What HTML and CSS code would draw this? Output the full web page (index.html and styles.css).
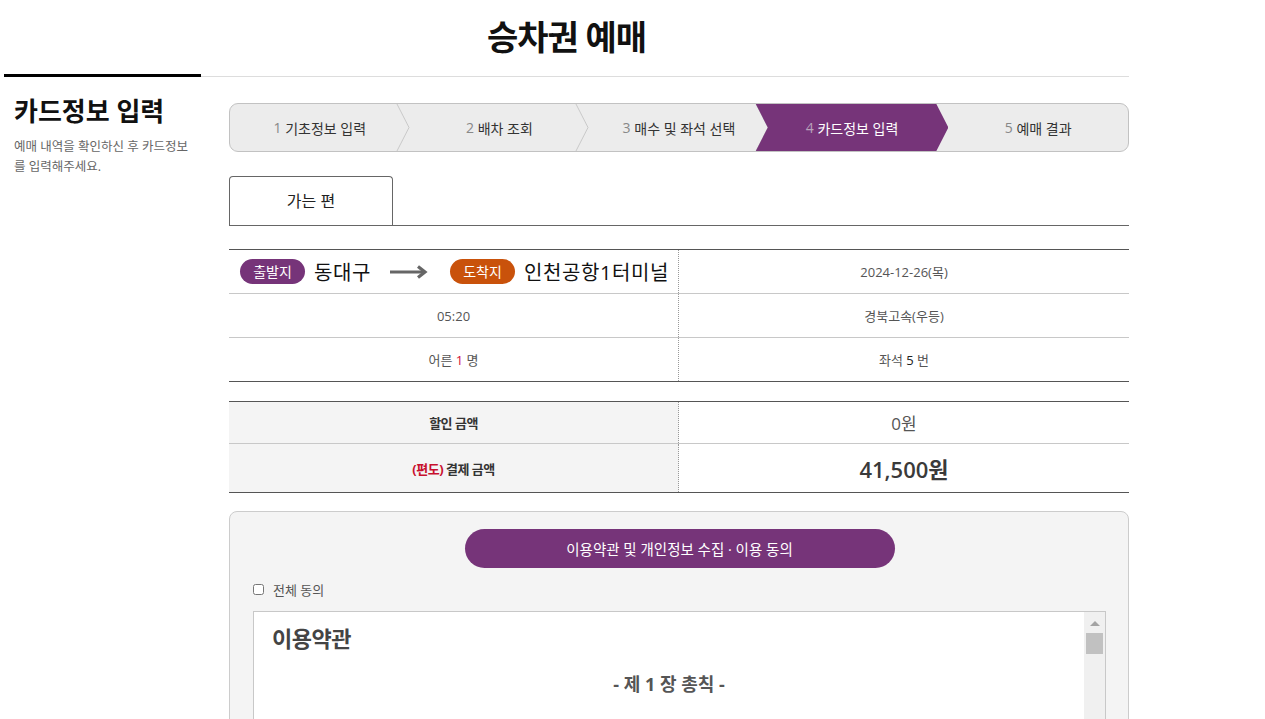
FILE: index.html
```html
<!DOCTYPE html>
<html lang="ko">
<head>
  <meta charset="UTF-8">
  <meta name="viewport" content="width=device-width, initial-scale=1.0">
  <title>승차권 예매</title>
  <link rel="stylesheet" href="styles.css">
</head>
<body>

<div id="wrap">
  <h1 class="page-title">승차권 예매</h1>
  <div class="rule">
    <div class="rule-mark"></div>
    <div class="rule-line"></div>
  </div>

  <div class="layout">
    <div class="side">
      <h2>카드정보 입력</h2>
      <p>예매 내역을 확인하신 후 카드정보를 입력해주세요.</p>
    </div>

    <div class="main">
      <ol class="steps">
        <li class="step"><span class="num">1</span> 기초정보 입력<svg class="chev" viewBox="0 0 14 48" preserveAspectRatio="none"><polyline points="1,0 13,24 1,48"/></svg></li>
        <li class="step"><span class="num">2</span> 배차 조회<svg class="chev" viewBox="0 0 14 48" preserveAspectRatio="none"><polyline points="1,0 13,24 1,48"/></svg></li>
        <li class="step"><span class="num">3</span> 매수 및 좌석 선택<svg class="chev" viewBox="0 0 14 48" preserveAspectRatio="none"><polyline points="1,0 13,24 1,48"/></svg></li>
        <li class="step active"><span class="num">4</span> 카드정보 입력</li>
        <li class="step"><span class="num">5</span> 예매 결과</li>
      </ol>

      <div class="tabs">
        <div class="tab">가는 편</div>
      </div>

      <div class="info">
        <div class="row">
          <div class="cell route">
            <span class="badge dep">출발지</span>
            <span class="place">동대구</span>
            <svg class="arrow" width="38" height="14" viewBox="0 0 38 14"><line x1="0" y1="7" x2="34" y2="7"/><polyline points="28,1.5 35,7 28,12.5"/></svg>
            <span class="badge arr">도착지</span>
            <span class="place">인천공항1터미널</span>
          </div>
          <div class="cell">2024-12-26(목)</div>
        </div>
        <div class="row">
          <div class="cell">05:20</div>
          <div class="cell">경북고속(우등)</div>
        </div>
        <div class="row">
          <div class="cell">어른 <span class="red">1</span> 명</div>
          <div class="cell">좌석 <span class="dark">5</span> 번</div>
        </div>
      </div>

      <div class="price">
        <div class="row small">
          <div class="cell label">할인 금액</div>
          <div class="cell discount">0원</div>
        </div>
        <div class="row">
          <div class="cell label"><span class="red">(편도)</span> 결제 금액</div>
          <div class="cell total">41,500원</div>
        </div>
      </div>

      <div class="terms">
        <button class="terms-btn">이용약관 및 개인정보 수집 · 이용 동의</button>
        <label class="agree"><input type="checkbox"> 전체 동의</label>
        <div class="terms-box">
          <div class="terms-body">
            <h3>이용약관</h3>
            <h4>- 제 1 장 총칙 -</h4>
          </div>
          <div class="scrollbar">
            <div class="scroll-up"></div>
            <div class="scroll-thumb"></div>
          </div>
        </div>
      </div>
    </div>
  </div>
</div>

</body>
</html>
```

FILE: styles.css
```css
body {
  font-family: "Open Sans", "Noto Sans CJK KR", sans-serif;
  margin: 0;
  padding: 0;
  background-color: #fff;
  color: #333;
}
#wrap {
  width: 1125px;
  margin-left: 4px;
}
.page-title {
  margin: 0;
  height: 74px;
  line-height: 74px;
  text-align: center;
  font-size: 34px;
  font-weight: bold;
  letter-spacing: -1px;
  color: #111;
}
.rule {
  display: flex;
  align-items: flex-end;
}
.rule-mark {
  width: 197px;
  height: 3px;
  background-color: #000;
}
.rule-line {
  flex: 1;
  border-bottom: 1px solid #ddd;
}
.layout {
  display: flex;
  gap: 28px;
}
.side {
  width: 197px;
  padding-left: 10px;
  box-sizing: border-box;
}
.side h2 {
  margin: 17px 0 0;
  font-size: 26px;
  line-height: 34px;
  font-weight: bold;
  color: #111;
}
.side p {
  margin: 9px 0 0;
  width: 180px;
  font-size: 12.5px;
  line-height: 20px;
  color: #666;
}
.main {
  width: 900px;
}

/* steps */
.steps {
  display: flex;
  list-style: none;
  margin: 26px 0 0;
  padding: 0;
  height: 47px;
  border: 1px solid #c2c2c2;
  border-radius: 9px;
  background-color: #ececec;
  overflow: hidden;
}
.step {
  position: relative;
  flex: 0 0 20%;
  box-sizing: border-box;
  display: flex;
  align-items: center;
  justify-content: center;
  font-size: 14px;
  color: #333;
  white-space: pre;
}
.step .num {
  color: #888;
}
.chev {
  position: absolute;
  right: 0;
  top: 0;
  width: 14px;
  height: 100%;
  z-index: 1;
}
.chev polyline {
  fill: none;
  stroke: #c8c8c8;
  stroke-width: 1;
}
.step.active {
  color: #fff;
  z-index: 2;
  padding-right: 13px;
}
.step.active::before {
  content: "";
  position: absolute;
  left: -13px;
  right: 0;
  top: 0;
  bottom: 0;
  background-color: #763479;
  clip-path: polygon(0 0, calc(100% - 12px) 0, 100% 50%, calc(100% - 12px) 100%, 0 100%, 12px 50%);
  z-index: -1;
}
.step.active .num {
  color: #b9a3bb;
}

/* tab */
.tabs {
  margin-top: 24px;
  border-bottom: 1px solid #666;
}
.tab {
  width: 162px;
  height: 48px;
  line-height: 48px;
  text-align: center;
  font-size: 16px;
  color: #222;
  border: 1px solid #666;
  border-bottom: none;
  border-radius: 4px 4px 0 0;
}

/* info tables */
.info, .price {
  border-top: 1px solid #555;
  border-bottom: 1px solid #555;
}
.info {
  margin-top: 23px;
}
.row {
  display: grid;
  grid-template-columns: 450px 450px;
  height: 43px;
  border-bottom: 1px solid #c8c8c8;
}
.row:last-child {
  border-bottom: none;
}
.cell {
  display: flex;
  align-items: center;
  justify-content: center;
  font-size: 13px;
  color: #555;
  white-space: pre;
}
.cell:first-child {
  border-right: 1px dotted #999;
}
.cell.route {
  justify-content: flex-start;
  padding-left: 11px;
}
.badge {
  display: inline-block;
  width: 65px;
  height: 25px;
  line-height: 25px;
  border-radius: 13px;
  text-align: center;
  font-size: 14px;
  color: #fff;
}
.badge.dep {
  background-color: #763479;
}
.badge.arr {
  background-color: #c9520b;
}
.place {
  font-size: 20px;
  letter-spacing: 0.6px;
  color: #111;
  margin-left: 9px;
}
.arrow {
  margin: 0 22px 0 19px;
}
.arrow line, .arrow polyline {
  fill: none;
  stroke: #666;
  stroke-width: 3.2;
}
.cell .red {
  color: #d0103a;
}
.cell .dark {
  color: #222;
}

.price {
  margin-top: 19px;
}
.price .row {
  height: 48px;
}
.price .row.small {
  height: 41px;
}
.price .cell.label {
  background-color: #f4f4f4;
  font-weight: bold;
  color: #333;
  letter-spacing: -0.5px;
}
.price .label .red {
  color: #c8102e;
}
.price .discount {
  font-size: 17px;
}
.price .total {
  font-size: 22px;
  font-weight: 600;
  color: #3a3a3a;
}

/* terms */
.terms {
  margin-top: 18px;
  background-color: #f4f4f4;
  border: 1px solid #ccc;
  border-radius: 8px;
  padding: 17px 22px 0 23px;
  height: 300px;
}
.terms-btn {
  display: block;
  margin: 0 auto;
  width: 430px;
  height: 39px;
  border: none;
  border-radius: 20px;
  background-color: #763479;
  color: #fff;
  font-family: inherit;
  font-size: 14.5px;
  cursor: pointer;
}
.agree {
  display: flex;
  align-items: center;
  height: 22px;
  margin-top: 10px;
  font-size: 13px;
  color: #555;
}
.agree input {
  margin: 0 9px 0 0;
  width: 11px;
  height: 11px;
}
.terms-box {
  display: flex;
  margin-top: 11px;
  height: 260px;
  background-color: #fff;
  border: 1px solid #c8c8c8;
}
.terms-body {
  flex: 1;
  padding: 0 18px;
}
.terms-body h3 {
  margin: 9px 0 0;
  font-size: 22px;
  font-weight: bold;
  letter-spacing: -0.5px;
  color: #444;
}
.terms-body h4 {
  margin: 17px 0 0;
  text-align: center;
  font-size: 18px;
  font-weight: bold;
  color: #555;
}
.scrollbar {
  width: 21px;
  background-color: #f0f0f0;
  display: flex;
  flex-direction: column;
  align-items: center;
}
.scroll-up {
  margin-top: 9px;
  width: 0;
  height: 0;
  border-left: 5px solid transparent;
  border-right: 5px solid transparent;
  border-bottom: 5px solid #a3a3a3;
}
.scroll-thumb {
  margin-top: 7px;
  width: 17px;
  height: 21px;
  background-color: #c1c1c1;
}
```
